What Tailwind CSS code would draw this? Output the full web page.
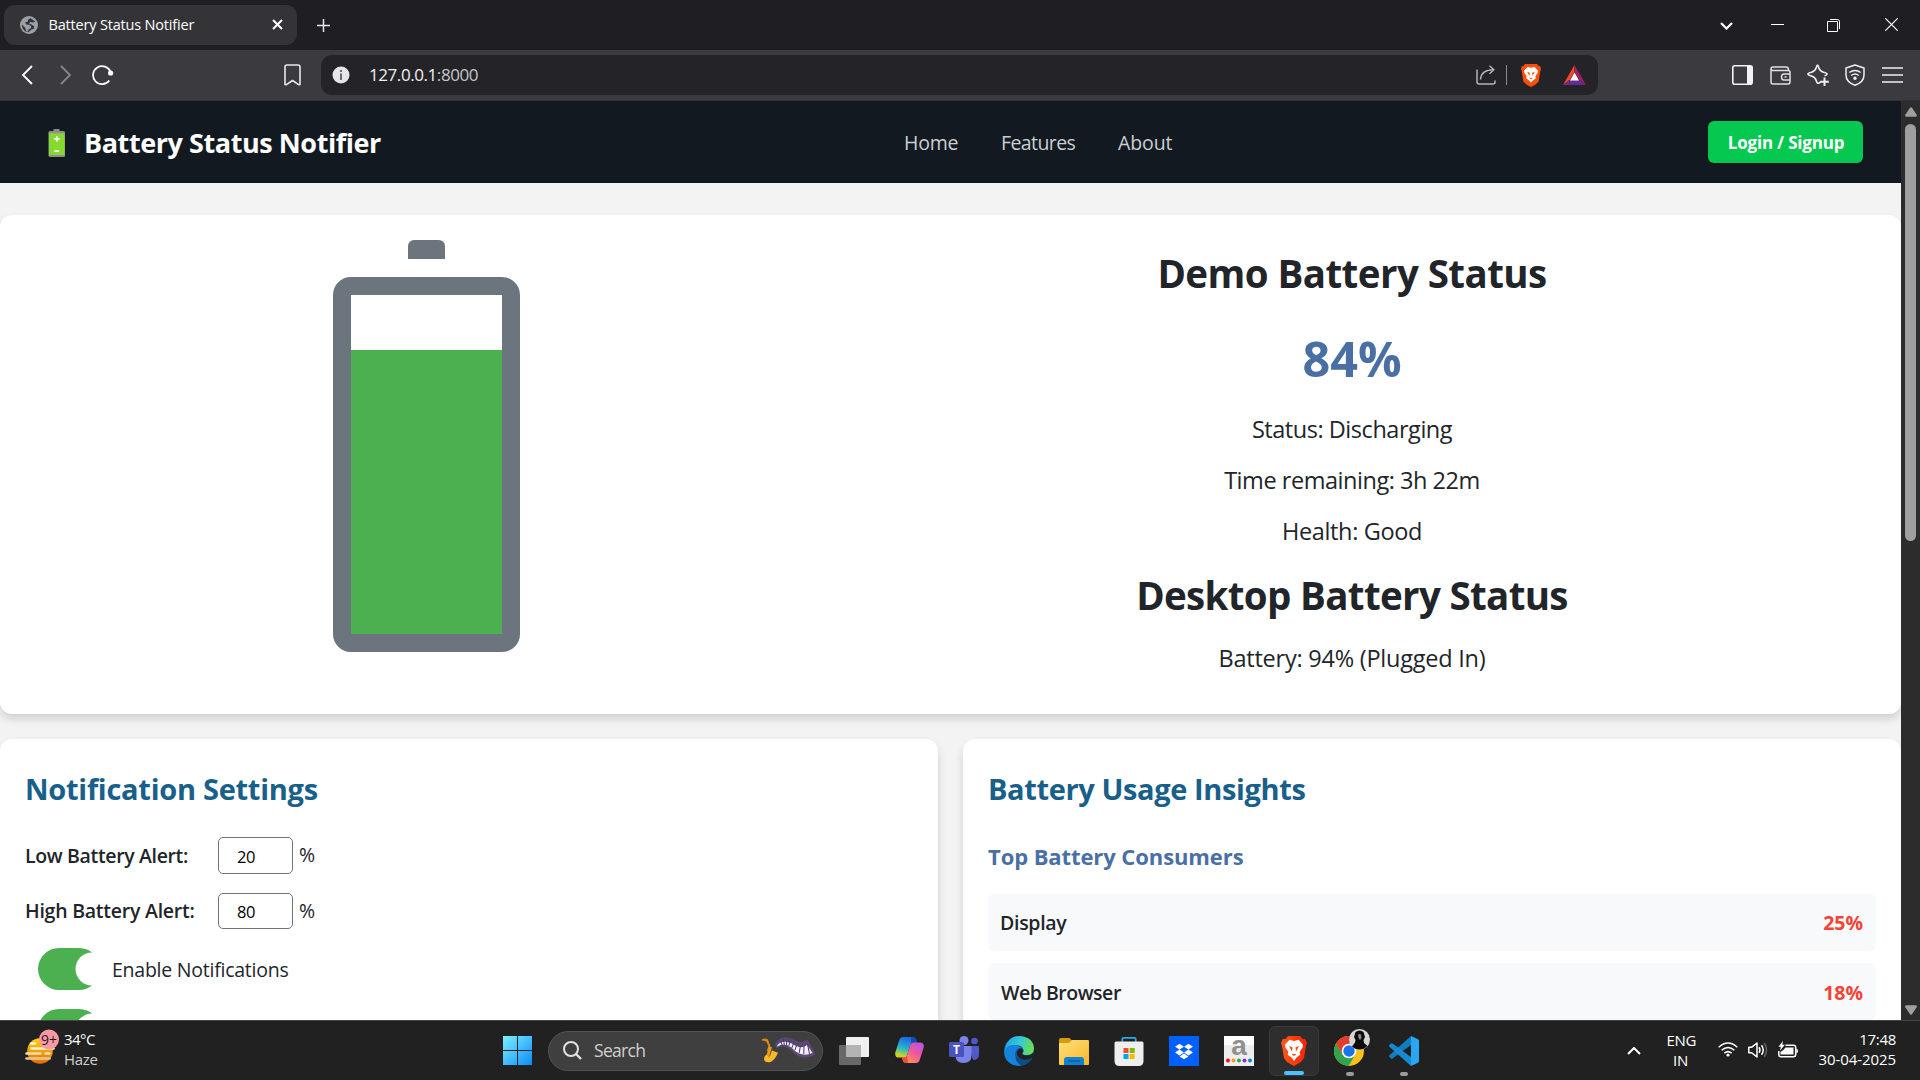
<!DOCTYPE html>
<html lang="en">
<head>
<meta charset="utf-8">
<title>Battery Status Notifier</title>
<script src="https://cdn.jsdelivr.net/npm/@tailwindcss/browser@4"></script>
</head>
<body class="w-[1920px] h-[1080px] overflow-hidden flex flex-col font-['Open_Sans',sans-serif] text-[#212529] whitespace-nowrap">

<!-- Tab strip -->
<div class="h-[50px] shrink-0 bg-[#1f1f23] flex items-center pl-1 text-white">
  <div class="w-[293px] h-10 -mt-[1px] rounded-[11px] bg-[#343438] flex items-center pl-4 pr-3.5">
    <svg class="size-[18px]" viewBox="0 0 18 18"><circle cx="9" cy="9" r="9" fill="#9aa0a6"/><path d="M10.5 2.2 8.2 3.4 7.6 5.8 5.2 6.6 6 8.6l3.4.2 1.8 1.4-.4 2.4-2.4.8-.4 2.4-2-.8-.6-3L2 8.4c-.4 4 2.600 7.400 6.600 7.600l2.800-2.600 2.800-1-.2-2.200-2.400-1.600-2.600-1.200 1.200-1.400 3.400.6 1.600-1.200z" fill="#343438"/></svg>
    <div class="ml-[10.5px] text-[14.5px] tracking-[-0.18px]">Battery Status Notifier</div>
    <svg class="ml-auto size-[11px]" viewBox="0 0 11 11" stroke="#fff" stroke-width="2"><path d="M1 1l9 9M10 1l-9 9"/></svg>
  </div>
  <svg class="ml-5 size-[13px]" viewBox="0 0 13 13" stroke="#e6e6e8" stroke-width="1.500"><path d="M6.500 0v13M0 6.500h13"/></svg>
  <div class="ml-auto flex items-center">
    <svg class="w-[13px] h-2 mr-[38px] mt-0.5" viewBox="0 0 13 8" fill="none" stroke="#fff" stroke-width="2.200"><path d="M1 1l5.500 5.500L12 1"/></svg>
    <div class="w-[13px] h-px bg-white mr-[43px] -mt-0.5"></div>
    <svg class="size-[13px] mr-[45px]" viewBox="0 0 13 13" fill="none" stroke="#fff"><path d="M.5 2.500h10v10H.5z"/><path d="M3 .5h7.500q2 0 2 2V10"/></svg>
    <svg class="size-[13px] mr-[22px] -mt-px" viewBox="0 0 13 13" stroke="#fff" stroke-width="1.200"><path d="M.3.3l12.400 12.400M12.700.3L.3 12.700"/></svg>
  </div>
</div>

<!-- Toolbar -->
<div class="h-[51px] shrink-0 bg-[#3b3b3f] border-b border-[#313135] flex items-center text-white">
  <svg class="ml-[21px] w-3 h-5" viewBox="0 0 12 20" fill="none" stroke="#fff" stroke-width="1.800"><path d="M11 1L2 10l9 9"/></svg>
  <svg class="ml-[27px] w-3 h-5" viewBox="0 0 12 20" fill="none" stroke="#86868a" stroke-width="1.800"><path d="M1 1l9 9-9 9"/></svg>
  <svg class="ml-5 w-[22px] h-5" viewBox="0 0 22 20" fill="none" stroke="#fff" stroke-width="1.700"><path d="M18.500 7A9 9 0 1 0 17.300 15.500"/><circle cx="18.600" cy="8" r="2.600" fill="#fff" stroke="none"/></svg>
  <svg class="ml-[170px] w-[17px] h-[22px]" viewBox="0 0 17 22" fill="none" stroke="#e8e8ea" stroke-width="1.600" stroke-linejoin="round"><path d="M1 3q0-2 2-2h11q2 0 2 2v17.500l-1 .3-6.500-4.300L2 20.800l-1-.3z"/></svg>
  <div class="ml-5 w-[1277px] h-10 rounded-[11px] bg-[#242428] flex items-center">
    <svg class="ml-[11px] size-[18px]" viewBox="0 0 18 18"><circle cx="9" cy="9" r="8.500" fill="#e6e6ea"/><path d="M8 7.500h2V14H8zM8 4h2v2H8z" fill="#6a6a70"/></svg>
    <div class="ml-[19px] text-[17px] tracking-[-0.43px] text-[#f0f0f2]">127.0.0.1<span class="text-[#c4c4c8]">:8000</span></div>
    <svg class="ml-auto size-5" viewBox="0 0 20 20" fill="none" stroke="#b2b2b6" stroke-width="1.500"><path d="M1 4.500V17q0 2 2 2h14q2 0 2-2v-1.500"/><path d="M4.500 14.500C5 8.500 8 4.800 17.500 4.800"/><path d="M13.500.8l4.300 4-4.300 4"/></svg>
    <div class="ml-[10px] w-px h-5 bg-[#8a8a8e]"></div>
    <svg class="ml-3.5 w-5 h-[23px]" viewBox="0 0 26 30"><path d="M5 0h16l2 3 2-.3 1 4-1 3-2 13-4 4-6 3.300-6-3.300-4-4L1 9.700 0 6.700l1-4L3 3z" fill="#fb4e0a"/><path d="M13 5l4.500-1.200L22 8.500l-.5 3.300-2.800 3.900.6 3L15.500 21.500 13 24l-2.500-2.500-3.800-2.800.6-3-2.800-3.900L4 8.500l4.500-4.700z" fill="#fff"/><path d="M8 10l3.500 1.500-.5 4zM18 10l-3.500 1.500.5 4zM10.500 18h5L13 20z" fill="#fb4e0a"/></svg>
    <svg class="ml-[22px] mr-3 w-[23px] h-5" viewBox="0 0 23 20"><path d="M11.500 0v7L7 14.500 0 20z" fill="#ff4724"/><path d="M11.500 0v7L16 14.500l7 5.500z" fill="#9e1f63"/><path d="M0 20l7-5h9l7 5z" fill="#662d91"/><path d="M11.500 7.500l4.500 8H7z" fill="#fff"/></svg>
  </div>
  <svg class="ml-auto w-[21px] h-5" viewBox="0 0 21 20"><rect x=".8" y=".8" width="19.400" height="18.400" rx="2" fill="none" stroke="#f2f2f4" stroke-width="1.600"/><path d="M15 1h5v18h-5z" fill="#f2f2f4"/></svg>
  <svg class="ml-[17px] w-[21px] h-[19px]" viewBox="0 0 21 19" fill="none" stroke="#e0e0e2" stroke-width="1.500"><path d="M1 3v13q0 2 2 2h15q2 0 2-2V6.500q0-2-2-2H3Q1 4.500 1 3 1 1 3 1h13q2.500 0 2.500 3"/><path d="M20 8h-6q-2.500 0-2.500 3t2.500 3h6"/><path d="M14.500 11h2"/></svg>
  <svg class="ml-4 size-[22px]" viewBox="0 0 22 22" fill="none" stroke="#f0f0f2" stroke-width="1.600" stroke-linejoin="round"><path d="M14 17.200Q12.800 19.300 11.300 19.300 10 19.300 9.200 16.500 8.300 13.200 4.500 12 .9 11.200.9 10.100T4.500 8.200Q8.300 7 9.200 3.700 10 1 10.500 1t1.300 2.700Q12.700 7 16.500 8.200q3.600.8 3.600 1.900t-2.600 1.700"/><path d="M17.500 13.500V22M13.300 17.700H21.800" stroke-width="2"/></svg>
  <svg class="ml-4 w-5 h-[22px]" viewBox="0 0 20 22" fill="none" stroke="#f0f0f2" stroke-width="1.500"><path d="M10 1L19 4v7q0 7-9 10.300Q1 18 1 11V4z" stroke-linejoin="round"/><path d="M4.300 8.500q5.700-4 11.400 0M6.200 11.500q3.800-2.800 7.600 0"/><circle cx="10" cy="14.200" r="1" fill="#fff"/></svg>
  <svg class="ml-[17px] mr-[17px] w-[21px] h-4" viewBox="0 0 21 16" stroke="#f0f0f2" stroke-width="1.700"><path d="M0 1h21M0 8h21M0 15h21"/></svg>
</div>

<!-- Web page and its scrollbar -->
<div class="h-[919px] shrink-0 flex overflow-hidden">
  <div class="w-[1901px] bg-[#f3f3f3] overflow-hidden">
    <nav class="h-[82px] bg-[#121920] flex items-center pl-12 pr-[38px]">
      <div class="w-[856px] flex items-center">
        <svg class="w-[18px] h-[28px] mt-0.5" viewBox="0 0 18 28"><path d="M5.500 0h6v3h-6z" fill="#8c8c8c"/><rect x=".5" y="2" width="16.500" height="26" rx="1.500" fill="#8f8f8f"/><path d="M1 4.300h15.500v21.700H1z" fill="#86d92f"/><path d="M8 7.200h1.800v1.800h1.800v1.800H9.800v1.800H8v-1.800H6.200V9H8zM6.300 21.300h4.600v1.800H6.300z" fill="#fff"/></svg>
        <div class="ml-[18px] pt-0.5 text-[27px] leading-9 font-bold tracking-[-0.43px] text-white">Battery Status Notifier</div>
      </div>
      <div class="flex pt-0.5 text-[19.5px] leading-[26px] text-[#cccfd2]">
        <a class="w-[97px] tracking-[-0.22px]">Home</a><a class="w-[117px] tracking-[-0.6px]">Features</a><a class="tracking-[-0.11px]">About</a>
      </div>
      <div class="ml-auto w-[155px] h-[42px] rounded-[6px] bg-[#05c850] text-white text-[17px] font-bold tracking-[-0.19px] flex items-center justify-center pt-0.5 pl-px">Login / Signup</div>
    </nav>

    <section class="mt-8 h-[499px] rounded-xl bg-white shadow-[0_5px_8px_rgba(0,0,0,0.14)] grid grid-cols-[852px_1fr]">
      <div class="flex flex-col items-center pt-[25px]">
        <div class="w-[37px] h-[19px] rounded-t-[6px] bg-[#6c757d]"></div>
        <div class="mt-[18px] w-[187px] h-[375px] rounded-[18px] border-[18px] border-[#6c757d] flex flex-col justify-end">
          <div class="bg-[#4caf50]" style="height:83.780%"></div>
        </div>
      </div>
      <div class="w-[1000px] flex flex-col items-center pt-[34px]">
        <h1 class="text-[38.5px] leading-[48px] font-bold tracking-[-0.56px]">Demo Battery Status</h1>
        <div class="mt-[31px] text-[48.5px] leading-[60px] font-bold text-[#4a6fa5]">84%</div>
        <p class="mt-[26px] text-[23.5px] leading-[30px] tracking-[-0.46px]">Status: Discharging</p>
        <p class="mt-[21px] text-[23.5px] leading-[30px] tracking-[-0.46px]">Time remaining: 3h 22m</p>
        <p class="mt-[21px] text-[23.5px] leading-[30px] tracking-[-0.35px]">Health: Good</p>
        <h1 class="mt-[25px] text-[38.5px] leading-[48px] font-bold tracking-[-0.66px]">Desktop Battery Status</h1>
        <p class="mt-[24px] text-[23.5px] leading-[30px] tracking-[-0.23px]">Battery: 94% (Plugged In)</p>
      </div>
    </section>

    <div class="mt-[25px] grid grid-cols-2 gap-[25px]">
      <section class="h-[400px] rounded-xl bg-white shadow-[0_5px_8px_rgba(0,0,0,0.14)] pt-[30px] pl-[25px]">
        <h2 class="text-[29px] leading-10 font-bold tracking-[-0.27px] text-[#186089]">Notification Settings</h2>
        <div class="mt-7 h-[37px] flex items-center text-[19.5px]">
          <label class="w-[193px] font-semibold tracking-[-0.35px]">Low Battery Alert:</label>
          <div class="w-[75px] h-[37px] rounded-[5px] border border-[#6c757d] pl-[18px] pt-[3px] flex items-center text-[16.5px] tracking-[-0.5px] text-black">20</div>
          <span class="ml-[6px] -mt-0.5">%</span>
        </div>
        <div class="mt-[19px] h-9 flex items-center text-[19.5px]">
          <label class="w-[193px] font-semibold tracking-[-0.24px]">High Battery Alert:</label>
          <div class="w-[75px] h-9 rounded-[5px] border border-[#6c757d] pl-[18px] pt-0.5 flex items-center text-[16.5px] tracking-[-0.5px] text-black">80</div>
          <span class="ml-[6px]">%</span>
        </div>
        <div class="mt-[19px] ml-[13px] h-[42px] flex items-center">
          <svg class="w-[54px] h-[42px]" viewBox="0 0 54 42"><rect width="62" height="42" rx="21" fill="#4caf50"/><circle cx="54" cy="21" r="16.500" fill="#fff"/></svg>
          <span class="ml-5 pt-0.5 text-[19.5px] tracking-[-0.24px]">Enable Notifications</span>
        </div>
        <div class="mt-[19px] ml-[13px] h-[42px] flex items-center">
          <svg class="w-[54px] h-[42px]" viewBox="0 0 54 42"><rect width="62" height="42" rx="21" fill="#4caf50"/><circle cx="54" cy="21" r="16.500" fill="#fff"/></svg>
        </div>
      </section>
      <section class="h-[400px] rounded-xl bg-white shadow-[0_5px_8px_rgba(0,0,0,0.14)] pt-[30px] px-[25px]">
        <h2 class="text-[29px] leading-10 font-bold tracking-[-0.38px] text-[#186089]">Battery Usage Insights</h2>
        <h3 class="mt-8 text-[22px] leading-[30px] font-bold tracking-[-0.09px] text-[#4a6fa5]">Top Battery Consumers</h3>
        <div class="mt-[23px] h-[57px] rounded-[6px] bg-[#f8f9fb] pl-3 pr-[13px] flex items-center justify-between text-[19.5px]">
          <span class="font-semibold tracking-[-0.3px]">Display</span><span class="font-bold text-[#f44336]">25%</span>
        </div>
        <div class="mt-3 h-[57px] rounded-[6px] bg-[#f8f9fb] px-[13px] pt-0.5 flex items-center justify-between text-[19.5px]">
          <span class="font-semibold tracking-[-0.48px]">Web Browser</span><span class="font-bold text-[#f44336]">18%</span>
        </div>
      </section>
    </div>
  </div>
  <div class="w-[19px] bg-[#2c2c2c] flex flex-col items-center pt-1.5 pb-[5px]">
    <svg class="w-3 h-2.5" viewBox="0 0 12 10"><path d="M5 .8q1-1 2 0l4.700 7q.6 2-1 2H1.300q-1.600 0-1-2z" fill="#9f9f9f"/></svg>
    <div class="mt-[7px] w-[11px] h-[417px] rounded-full bg-[#9f9f9f]"></div>
    <svg class="mt-auto w-3 h-2.5" viewBox="0 0 12 10"><path d="M5 9.200q1 1 2 0l4.700-7q.6-2-1-2H1.300q-1.600 0-1 2z" fill="#9f9f9f"/></svg>
  </div>
</div>

<!-- Taskbar -->
<div class="h-[60px] shrink-0 bg-[#202120] border-t border-[#454545] flex items-center text-white">
  <div class="w-[490px] flex items-center pl-[25px]">
    <svg class="w-[35px] h-9 -mt-[7px]" viewBox="0 0 35 36"><defs><linearGradient id="sun" x1="0" y1="0" x2="0" y2="1"><stop stop-color="#ffd20a"/><stop offset="1" stop-color="#e36c0a"/></linearGradient></defs><circle cx="15" cy="22" r="12.800" fill="url(#sun)"/><g stroke-linecap="round" stroke-width="2.600"><path d="M6 14.500h4" stroke="#fff6c0"/><path d="M6.500 19.500h22" stroke="#fff3d0"/><path d="M1.500 24.500h14M20.500 24.500h4" stroke="#f7deb0"/><path d="M1.500 29.500h23" stroke="#e9c88e"/></g><circle cx="24" cy="10.500" r="10" fill="#fe99a4"/><text x="24" y="15.500" font-size="14" text-anchor="middle" fill="#1c1c1c">9+</text></svg>
    <div class="ml-[4px] -mt-1 text-[15px] leading-5"><div class="tracking-[-0.53px]">34°C</div><div class="tracking-[-0.31px] text-[#cfcfcf]">Haze</div></div>
  </div>
  <div class="w-[55px] pl-[13px]">
    <svg class="size-[29px]" viewBox="0 0 29 29"><defs><linearGradient id="win" x1="0" y1="0" x2="1" y2="1"><stop stop-color="#7eefff"/><stop offset="1" stop-color="#0a8df8"/></linearGradient></defs><path d="M0 0h14v14H0zM15 0h14v14H15zM0 15h14v14H0zM15 15h14v14H15z" fill="url(#win)"/></svg>
  </div>
  <div class="ml-[3px] w-[275px] h-10 rounded-full bg-[#3e3f3e] border border-[#525352] flex items-center">
    <svg class="ml-3.5 size-[19px]" viewBox="0 0 19 19" fill="none" stroke="#e2e2e2" stroke-width="2"><circle cx="8" cy="8" r="7"/><path d="M13 13l5 5" stroke-width="2.400"/></svg>
    <span class="ml-3 text-[17.5px] tracking-[-0.7px] text-[#d0d0d0]">Search</span>
    <svg class="ml-auto mr-1.5 w-[54px] h-[26px] -mt-px" viewBox="0 0 54 26"><path d="M0 3q3-2 5.500 0l2.500 6.500L8 14l-2.500-.5L7 9 5 4.500Q3 3 0 3z" fill="#d98a16" stroke="#d98a16" stroke-width="1.200"/><path d="M8.500 10l-2.700 9" stroke="#e79a1c" stroke-width="3"/><path d="M10 13.500l6 2.300Q12.500 24 8 25.200 2.500 26 2 22q0-3 3-4.500 1 3 3 1.500z" fill="#fbb929"/><path d="M13 7Q17-.5 25 .5q5 .8 9 3.500 4 2 8 0l3-1.300q1 0 1.500 1.300l6.500 12q.5 2-2 3-8 3-15 0-4-2-7-5.500Q25 9.500 21 9.500q-4 0-6.500 2z" fill="#5d4777"/><path d="M15 9Q18.500 4 25 5q5 1 9 4 4 2 8.500.5l2.500-1.500 5.500 8q-7 3-13.500.5-4-2-7-5.500-4.500-4-9-3.500-3 .2-5.500 2z" fill="#f6effd"/><path d="M18.500 3l1.500 5M21.500 2l.8 6M25 2l-.6 6.500M28.500 3l-1.700 6M32 5l-2.200 6M35 7l-2 6M38.500 8l-1.300 8M42 8l-.2 9M45.500 7l2 10" stroke="#4b3762" stroke-width="1"/></svg>
  </div>
  <div class="ml-[3.5px] flex">
    <div class="w-[55px] h-[50px] grid place-items-center">
      <svg class="size-[30px]" viewBox="0 0 30 30"><path d="M0 10q0-1 1-1h21v19q0 1-1 1H1q-1 0-1-1z" fill="#686868"/><rect x="7" y="1" width="23" height="20" rx="1" fill="#f0f0f0"/><path d="M7 9h15v12H7z" fill="#b4b4b4"/></svg>
    </div>
    <div class="w-[55px] h-[50px] grid place-items-center">
      <svg class="w-[29px] h-[26px] -mt-0.5" viewBox="0 0 29 26"><defs><linearGradient id="cpa" x1=".3" y1="0" x2="0" y2="1"><stop stop-color="#1a6ee8"/><stop offset=".5" stop-color="#2bb6c8"/><stop offset=".8" stop-color="#b8d335"/><stop offset="1" stop-color="#f6c514"/></linearGradient><linearGradient id="cpb" x1="1" y1="0" x2=".2" y2="1"><stop stop-color="#a658f0"/><stop offset=".5" stop-color="#f0569c"/><stop offset="1" stop-color="#ff9a50"/></linearGradient></defs><path d="M8 0h10q2.500 0 3.300 3l.7 2.500h-3.500q-2.500 0-3.300 2.800l-3 9.700q-.7 2.500-3.500 2.500H4q-4.500 0-3.700-5L4 4Q5 0 8 0z" fill="url(#cpa)"/><path d="M16 0h2q2.500 0 3.300 3l.7 2.500h-3.500q-1.500 0-2.300 1z" fill="#1648b8"/><path d="M21 26H11q-2.500 0-3.300-3L7 20.500h2q2.500 0 3.300-2.800l3-9.700q.7-2.500 3.500-2.500H25q4.500 0 3.700 5L25 22q-1 4-4 4z" fill="url(#cpb)"/><path d="M13 26h-2q-2.500 0-3.300-3L7 20.500h2q2 0 3-1.500z" fill="#f04a3c"/></svg>
    </div>
    <div class="w-[55px] h-[50px] grid place-items-center">
      <svg class="size-[30px] -mt-0.5" viewBox="0 0 30 30"><circle cx="25.500" cy="6" r="3.300" fill="#5059c9"/><path d="M20 11h9q1 0 1 1v7q0 6-6 6z" fill="#5059c9"/><circle cx="15" cy="5.500" r="4.500" fill="#7b83eb"/><path d="M7 11h14.500q1 0 1 1v9q0 7-8 7t-8-7z" fill="#7b83eb"/><rect x="0" y="7" width="15" height="15" rx="1.500" fill="#4b53bc"/><text x="7.500" y="18.800" font-size="12" font-weight="700" text-anchor="middle" fill="#fff">T</text></svg>
    </div>
    <div class="w-[55px] h-[50px] grid place-items-center">
      <svg class="size-[30px]" viewBox="0 0 30 30"><defs><linearGradient id="eda" x1="0" y1=".3" x2="1" y2=".5"><stop stop-color="#1fa5e8"/><stop offset=".5" stop-color="#35c9d6"/><stop offset="1" stop-color="#6be04e"/></linearGradient></defs><circle cx="15" cy="15" r="15" fill="#0c59a4"/><path d="M1 12Q4 0 16 0q13 1 14 12 0 7-7 7-4 0-4.500-1.500 1.500-1.500 1-3.500-1-5-8-5Q3 9 .3 16z" fill="url(#eda)"/><path d="M.2 16Q2 9 9.500 9q6 0 8 3-5-.5-6 4-.5 8 6 13Q10 31 4.500 26 0 22 .2 16z" fill="#1583da"/><path d="M11.500 16q0 7 8 8.500 5 .5 8.500-2-3.500 6-10.500 7.300Q10 26 11.500 16z" fill="#114a8b"/><path d="M18 17q.2 2.500 5 2.500 4 0 6.500-3l.8 4-3 1.800q-5 2.700-10 .7-4-2-4.500-6 .5-4.500 4.500-4.500 3.500 1.500 .7 4.500z" fill="#202120"/></svg>
    </div>
    <div class="w-[55px] h-[50px] grid place-items-center">
      <svg class="size-[30px]" viewBox="0 0 30 30"><defs><linearGradient id="fo" x1="0" y1="0" x2="1" y2="1"><stop stop-color="#ffe07a"/><stop offset="1" stop-color="#f8b72a"/></linearGradient></defs><path d="M0 4q0-2 2-2h8.500l3 3-3 4H0z" fill="#d99a10"/><path d="M0 7h10l3-3h16q1 0 1 1v23q0 1-1 1H1q-1 0-1-1z" fill="url(#fo)"/><path d="M5 29v-5q0-3 3-3h14q3 0 3 3v5z" fill="#1080d0"/><path d="M9 25h12" stroke="#0b5698" stroke-width="1.200"/></svg>
    </div>
    <div class="w-[55px] h-[50px] grid place-items-center">
      <svg class="size-[30px]" viewBox="0 0 30 30"><path d="M8.300 7V3q0-1.200 1.200-1.200h11q1.200 0 1.200 1.200v4" fill="none" stroke="#29a8ea" stroke-width="1.800"/><path d="M.5 7q0-1.500 1.500-1.500h26q1.500 0 1.500 1.500v18q0 5-5 5h-19q-5 0-5-5z" fill="#eeeeee"/><path d="M9.500 12h5v5h-5z" fill="#f25022"/><path d="M15.700 12h5v5h-5z" fill="#7fba00"/><path d="M9.500 18h5v5h-5z" fill="#00a4ef"/><path d="M15.700 18h5v5h-5z" fill="#ffb900"/></svg>
    </div>
    <div class="w-[55px] h-[50px] grid place-items-center">
      <svg class="size-[30px]" viewBox="0 0 30 30"><path d="M0 0h30v30H0z" fill="#0061fe"/><path d="M10.500 7.800l4.500 2.900-4.500 2.900L6 10.700zM19.500 7.800l4.500 2.900-4.500 2.900-4.500-2.900zM10.500 13.600l4.500 2.900-4.500 2.900L6 16.500zM19.500 13.600l4.500 2.900-4.500 2.900-4.500-2.900zM15 17.500l4.500 2.900-4.500 2.900-4.500-2.900z" fill="#fff"/></svg>
    </div>
    <div class="w-[55px] h-[50px] grid place-items-center">
      <svg class="size-[30px] overflow-visible" viewBox="0 0 30 30"><path d="M0 0h30v30H0z" fill="#ededed"/><path d="M0 0h30v9H0z" fill="#fff"/><text x="15" y="18.500" font-size="28" font-family="Liberation Sans" font-weight="700" text-anchor="middle" fill="#8f8f8f">a</text><circle cx="4" cy="24.500" r="2" fill="#f00c1c"/><circle cx="9.500" cy="24.500" r="2" fill="#f59a18"/><circle cx="15" cy="24.500" r="2" fill="#1fab54"/><circle cx="20.500" cy="24.500" r="2" fill="#8b2fc9"/><circle cx="26" cy="24.500" r="2" fill="#1186e0"/></svg>
    </div>
    <div class="w-[55px] h-[50px] grid place-items-center">
      <div class="relative w-[50px] h-[50px] rounded-[6px] bg-[#2d2e2d] border border-[#383938] grid place-items-center">
        <svg class="w-[26px] h-[30px]" viewBox="0 0 26 30"><defs><linearGradient id="br"><stop stop-color="#ff5a1c"/><stop offset="1" stop-color="#ff2000"/></linearGradient></defs><path d="M7 0h12l2.500 3 2.500-.3L26 7l-1 3-2 12-3 4-7 4-7-4-3-4L1 10 0 7l2-4.300 2.500.3z" fill="url(#br)"/><path d="M13 5l4.500-1.200L22 8.500l-.5 3.300-2.800 3.900.6 3L15.500 21.500 13 25l-2.500-3.500-3.800-2.800.6-3-2.800-3.900L4 8.500l4.500-4.700z" fill="#fff"/><path d="M8 10l3.500 1.500-.5 4zM18 10l-3.500 1.500.5 4zM10.500 18h5L13 20z" fill="#ff3c0e"/></svg>
        <div class="absolute bottom-0 w-5 h-1 rounded-full bg-[#4cc2ff]"></div>
      </div>
    </div>
    <div class="relative w-[55px] h-[50px] grid place-items-center">
      <svg class="size-[30px]" viewBox="0 0 30 30"><circle cx="15" cy="15" r="15" fill="#fbc116"/><path d="M2 7.500A15 15 0 0 1 28 7.500H15z" fill="#e33b2e"/><path d="M2 7.500A15 15 0 0 0 14.500 30L21.500 18.500 15 15 8.500 18.700z" fill="#2da44e"/><path d="M2 7.500L8.500 18.700 15 8h6V4H5z" fill="#e33b2e"/><circle cx="15" cy="15" r="7.300" fill="#fff"/><circle cx="15" cy="15" r="5.700" fill="#1a73e8"/></svg>
      <svg class="absolute left-[27px] top-[3px] size-[21px]" viewBox="0 0 21 21"><circle cx="10.500" cy="10.500" r="10.500" fill="#d6d6d6"/><path d="M6.500 3q4-3 8 0l1.500 5-1.500 3 .5 3 3.500 3q-3.500 3.500-8 3.500-4.500 0-7.500-3l3-4 .5-2.500L5 8z" fill="#0c0c0c"/><path d="M9 5.500q2-1 3 0l.5 3.500-1.500 2-1.500-2z" fill="#8a8a8a"/></svg>
      <div class="absolute bottom-0 left-[24px] w-2 h-1 rounded-full bg-[#9b9b9b]"></div>
    </div>
    <div class="relative w-[55px] h-[50px] grid place-items-center">
      <svg class="size-[30px]" viewBox="0 0 30 30"><path d="M22 0v9L3.500 22.500Q2.500 23 1.700 22.300L.4 21q-.8-1 0-1.800z" fill="#0f7cc4"/><path d="M22 30v-9L3.500 7.500Q2.500 7 1.700 7.700L.4 9q-.8 1 0 1.800z" fill="#168bd2"/><path d="M22 0l7 3.300q1 .6 1 1.700v20q0 1.200-1 1.700L22 30z" fill="#2aa7f2"/></svg>
      <div class="absolute bottom-0 left-[23px] w-2 h-1 rounded-full bg-[#9b9b9b]"></div>
    </div>
  </div>
  <svg class="ml-auto w-3.5 h-2" viewBox="0 0 14 8" fill="none" stroke="#fff" stroke-width="2"><path d="M1 7l6-6 6 6"/></svg>
  <div class="ml-[26px] -mt-0.5 w-[28px] text-center text-[15px] leading-5 tracking-[-0.31px]"><div>ENG</div><div>IN</div></div>
  <svg class="ml-[23px] w-5 h-[15px] -mt-[3px]" viewBox="0 0 20 15" fill="none" stroke="#fff" stroke-width="1.500"><path d="M.7 5.200q9.300-8.500 18.600 0M3.600 8.300q6.400-5.600 12.800 0M6.300 11.200q3.700-3.200 7.400 0"/><circle cx="10" cy="13" r="1.600" fill="#fff" stroke="none"/></svg>
  <svg class="ml-2.5 w-5 h-4 -mt-px" viewBox="0 0 20 16" fill="none" stroke="#fff" stroke-width="1.500"><path d="M.8 5.200h3L9 1v14l-5.200-4.200h-3z" stroke-linejoin="round"/><path d="M11 5.200q2 2.800 0 5.600M13.500 3.200q3.500 4.800 0 9.600"/><path d="M16.300 1.200q4.500 6.800 0 13.600" stroke="#666"/></svg>
  <svg class="ml-[10px] w-5 h-[17px] -mt-[3px]" viewBox="0 0 20 17"><path d="M7.500 4.300h8q2.200 0 2.200 2.200v7q0 2.200-2.200 2.200H3q-2.200 0-2.200-2.200V10" fill="none" stroke="#fff" stroke-width="1.500"/><path d="M18.300 7.500q1.700.3 1.700 2.500t-1.700 2.500z" fill="#fff"/><path d="M7.500 6.500h8v7h-13v-2.500q3-1.500 5-4.500z" fill="#fff"/><path d="M5 0L.5 5.800h2.300L2 9.800l4.800-6H4.300z" fill="#fff"/></svg>
  <div class="ml-[21px] mr-6 -mt-1 text-right text-[15px] leading-5"><div class="tracking-[-0.29px]">17:48</div><div class="tracking-[-0.08px]">30-04-2025</div></div>
</div>
</body>
</html>
